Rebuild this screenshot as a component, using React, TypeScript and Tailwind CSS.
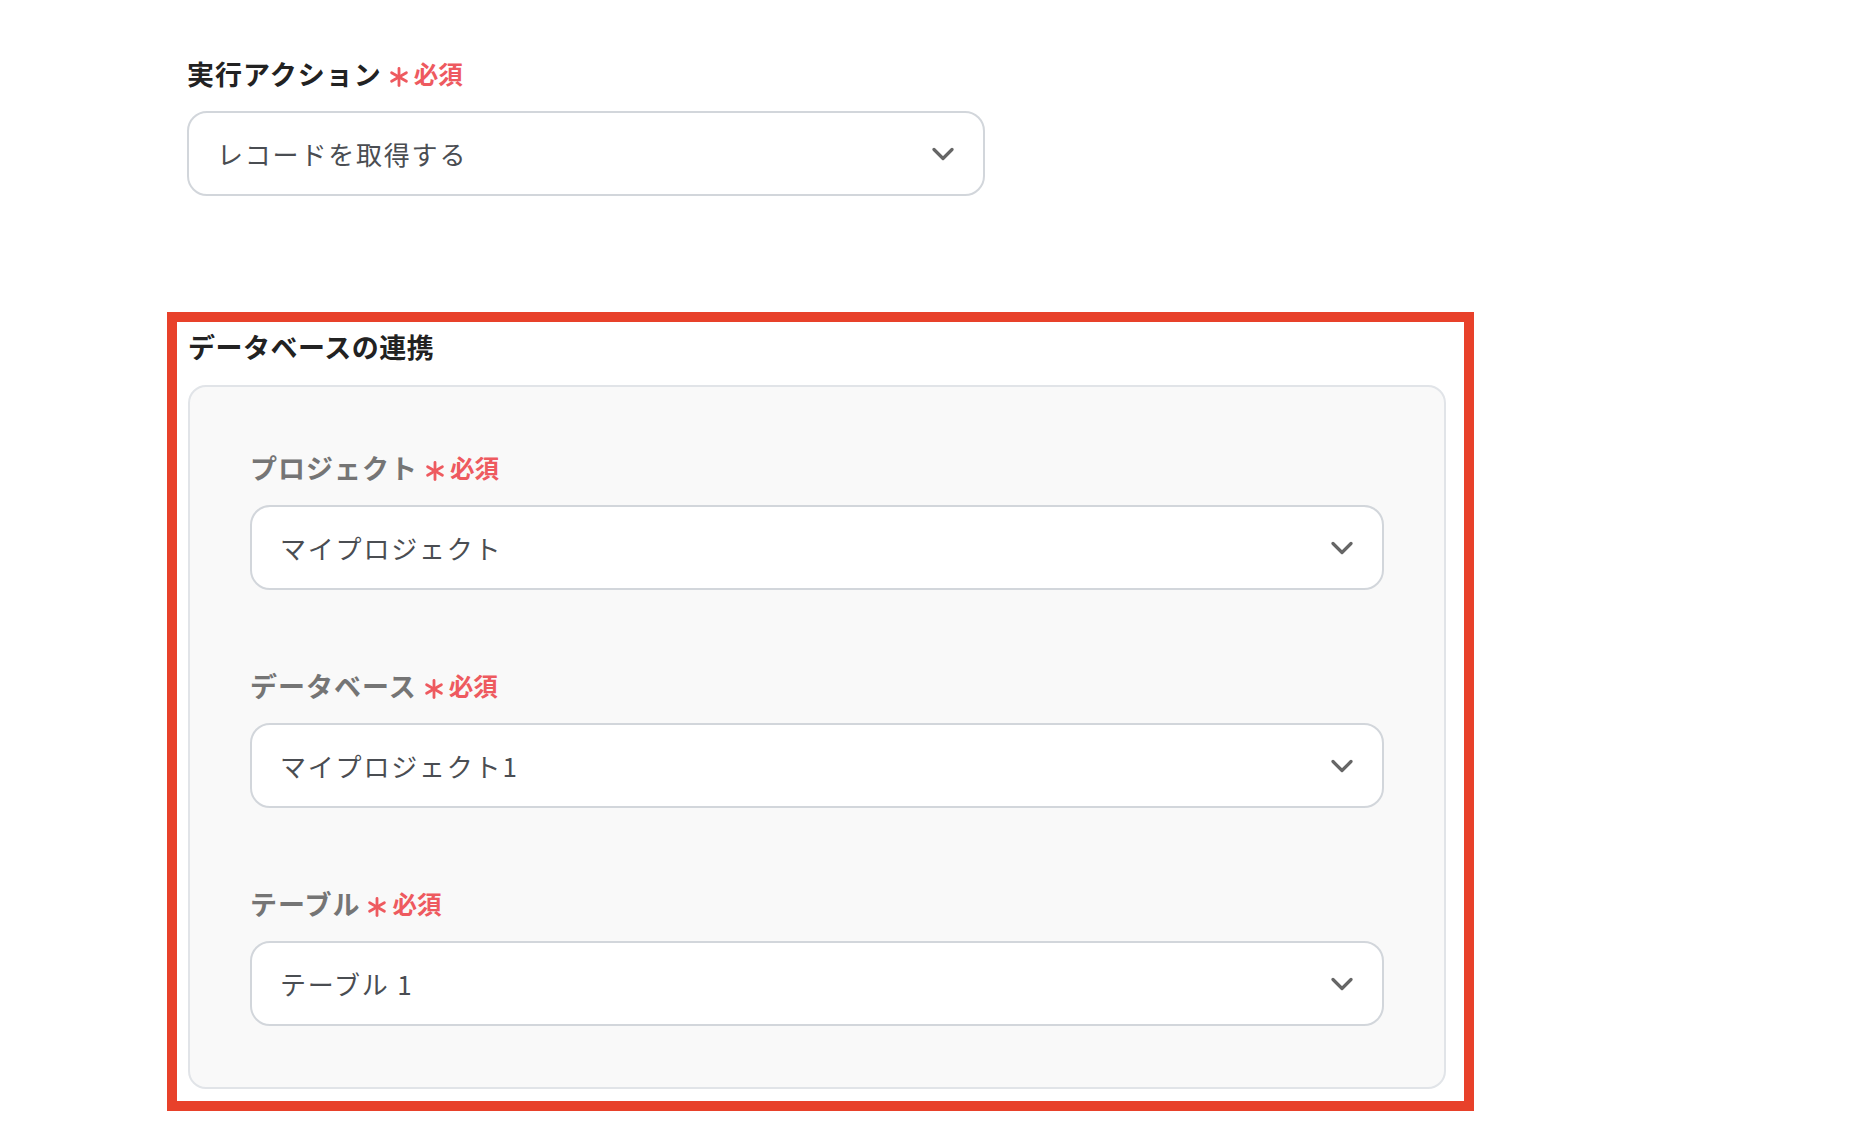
import React from "react";

const FONT = { fontFamily: '"Noto Sans CJK JP", "Noto Sans", sans-serif' };

function Asterisk() {
  return (
    <svg className="w-[20px] h-[20px] shrink-0 mt-[6px]" viewBox="0 0 20 20" fill="none" stroke="#ee5a5f" strokeWidth={2.8} strokeLinecap="round">
      <path d="M10 1.5v17" />
      <path d="M2.6 5.8l14.8 8.4" />
      <path d="M17.4 5.8l-14.8 8.4" />
    </svg>
  );
}

function Required() {
  return (
    <span className="flex items-center gap-[5px] ml-[7px]">
      <Asterisk />
      <span className="text-[24.5px] font-bold text-[#ee5a5f] leading-[32px]">必須</span>
    </span>
  );
}

function Label({ text, muted }: { text: string; muted?: boolean }) {
  return (
    <div className="flex items-center h-[32px]">
      <span
        className={`text-[27px] font-bold leading-[32px] tracking-[1px] ${
          muted ? "text-[#757575]" : "text-[#222222]"
        }`}
      >
        {text}
      </span>
      <Required />
    </div>
  );
}

function Select({ value }: { value: string }) {
  return (
    <div className="mt-[21px] h-[85px] flex items-center justify-between rounded-[20px] border-2 border-[#d2d6db] bg-white pl-[28px] pr-[29px]">
      <span className="text-[26px] text-[#4a4d52] tracking-[1.8px]">{value}</span>
      <svg className="w-[22px] h-[14px]" viewBox="0 0 22 14" fill="none" stroke="#666666" strokeWidth={3.2} strokeLinecap="round" strokeLinejoin="round">
        <path d="M2 2.5l9 9 9-9" />
      </svg>
    </div>
  );
}

const FIELDS = [
  { label: "プロジェクト", value: "マイプロジェクト" },
  { label: "データベース", value: "マイプロジェクト1" },
  { label: "テーブル", value: "テーブル 1" },
];

export default function App() {
  return (
    <div className="min-h-screen bg-white pl-[167px] pt-[58px] pb-[21px]" style={FONT}>
      {/* Action */}
      <div className="ml-[20px] w-[798px]">
        <Label text="実行アクション" />
        <Select value="レコードを取得する" />
      </div>

      {/* Database link (highlighted) */}
      <div className="mt-[116px] w-[1307px] border-[10px] border-[#e8412a] pl-[11px] pr-[18px] pt-[9px] pb-[12px]">
        <div className="text-[27px] font-bold leading-[32px] text-[#222222] tracking-[0.5px]">
          データベースの連携
        </div>
        <div className="mt-[22px] rounded-[18px] border-2 border-[#e1e4e8] bg-[#f9f9f9] px-[60px] pt-[65px] pb-[61px] flex flex-col gap-[80px]">
          {FIELDS.map((f) => (
            <div key={f.label}>
              <Label text={f.label} muted />
              <Select value={f.value} />
            </div>
          ))}
        </div>
      </div>
    </div>
  );
}
